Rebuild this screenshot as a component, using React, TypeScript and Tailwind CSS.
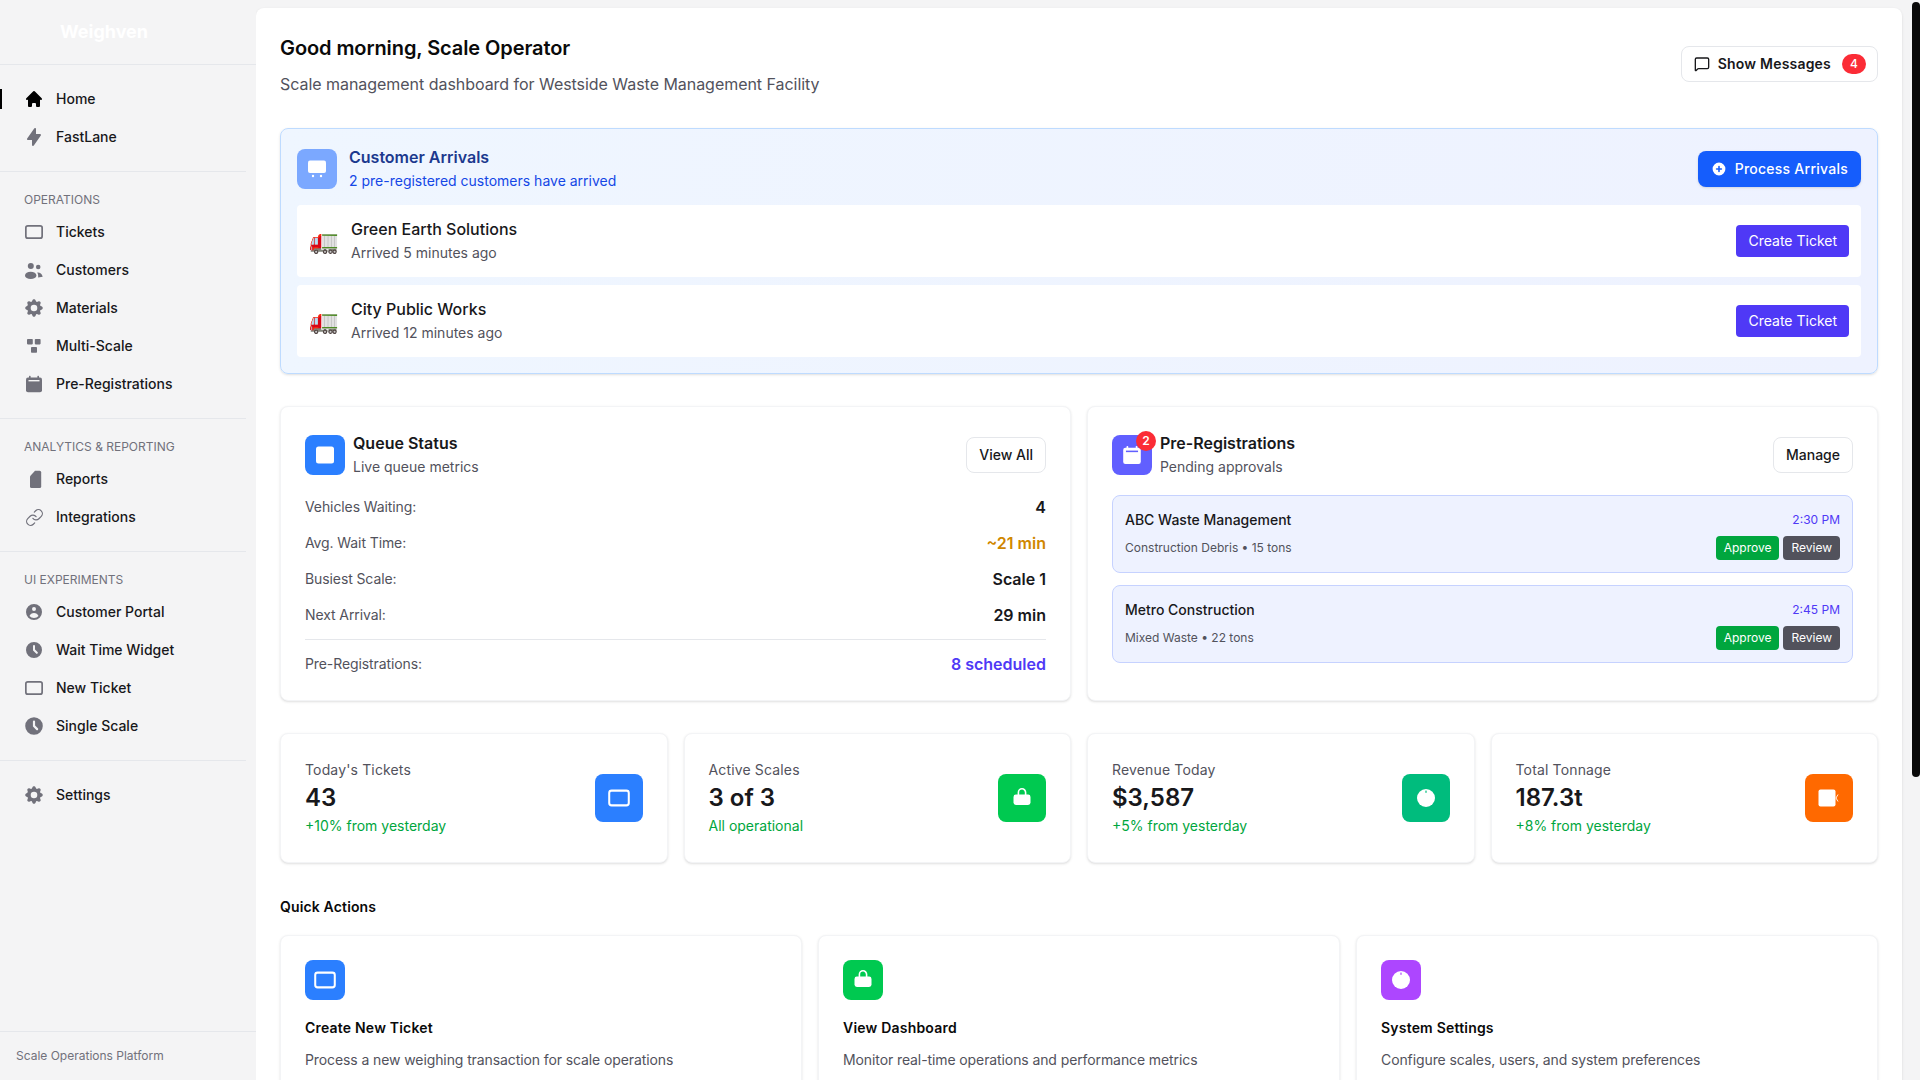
import type { ReactNode } from 'react'
import { Link as LinkIcon, MessageSquare } from 'lucide-react'
import { HiClock, HiCog, HiHome, HiLightningBolt, HiPlusCircle, HiUserCircle } from 'react-icons/hi'

function TicketOutline({ className = 'w-5 h-5' }: { className?: string }) {
  return (
    <svg viewBox="0 0 20 20" className={className} fill="none" stroke="currentColor" strokeWidth="1.7">
      <rect x="1.85" y="3.85" width="16.3" height="12.3" rx="2" />
    </svg>
  )
}

function TicketSolid({ className = 'w-5 h-5' }: { className?: string }) {
  return (
    <svg viewBox="0 0 20 20" className={className} fill="currentColor">
      <rect x="1" y="1.5" width="18" height="17" rx="2.5" />
    </svg>
  )
}

function UsersIcon() {
  return (
    <svg viewBox="0 0 20 20" className="w-5 h-5" fill="currentColor">
      <circle cx="6.8" cy="6" r="3" />
      <circle cx="14.2" cy="7" r="2.3" />
      <ellipse cx="6.7" cy="15.4" rx="5.7" ry="3.6" />
      <path d="M13.2 12.6c2.4-.4 4.6.9 5.5 4.2l-4.6.6c.3-1.9-.1-3.4-.9-4.8z" />
    </svg>
  )
}

function ScalesIcon() {
  return (
    <svg viewBox="0 0 20 20" className="w-5 h-5" fill="currentColor">
      <rect x="3" y="3" width="5.8" height="5.4" rx="0.8" />
      <rect x="10.8" y="3" width="5.8" height="5.4" rx="0.8" />
      <rect x="7" y="11" width="6" height="5.8" rx="0.8" />
    </svg>
  )
}

function CalendarIcon({ strip, className = 'w-5 h-5' }: { strip: string; className?: string }) {
  return (
    <svg viewBox="0 0 20 20" className={className} fill="currentColor">
      <rect x="5" y="1.8" width="1.6" height="3" rx="0.6" />
      <rect x="13.4" y="1.8" width="1.6" height="3" rx="0.6" />
      <rect x="2" y="3.4" width="16" height="14.8" rx="2" />
      <rect x="4.5" y="6" width="11" height="1.4" fill={strip} />
    </svg>
  )
}

function ReportIcon() {
  return (
    <svg viewBox="0 0 20 20" className="w-5 h-5" fill="currentColor">
      <path d="M11 1.8h4.6a1.6 1.6 0 0 1 1.6 1.6v14a1.6 1.6 0 0 1-1.6 1.6H7.6A1.6 1.6 0 0 1 6 17.4V7.2z" />
    </svg>
  )
}

function LockIcon({ className = 'w-5 h-5' }: { className?: string }) {
  return (
    <svg viewBox="0 0 20 20" className={className} fill="white">
      <path d="M6.4 8V4.4a3.6 3.6 0 0 1 7.2 0V8" fill="none" stroke="white" strokeWidth="1.6" />
      <rect x="1.5" y="6.5" width="17" height="10.5" rx="2.4" />
    </svg>
  )
}

function DialIcon({ tick, className = 'w-5 h-5' }: { tick: string; className?: string }) {
  return (
    <svg viewBox="0 0 20 20" className={className}>
      <circle cx="10" cy="10" r="9" fill="white" />
      <rect x="9.4" y="2.6" width="1.2" height="2.2" fill={tick} />
    </svg>
  )
}

function TonnageIcon() {
  return (
    <svg viewBox="0 0 24 24" className="w-6 h-6">
      <rect x="1.5" y="3.5" width="17" height="17" rx="2" fill="white" />
      <path d="M21 8.5 19 12l2 3.5" fill="none" stroke="white" strokeWidth="0.9" />
    </svg>
  )
}

function TruckIcon() {
  return <span className="w-[30px] shrink-0 text-2xl leading-none">🚛</span>
}

const navSections: { title?: string; items: { label: string; icon: ReactNode; active?: boolean }[] }[] = [
  {
    items: [
      { label: 'Home', icon: <HiHome className="w-5 h-5 text-black" />, active: true },
      { label: 'FastLane', icon: <HiLightningBolt className="w-5 h-5" /> },
    ],
  },
  {
    title: 'Operations',
    items: [
      { label: 'Tickets', icon: <TicketOutline /> },
      { label: 'Customers', icon: <UsersIcon /> },
      { label: 'Materials', icon: <HiCog className="w-[22px] h-[22px] shrink-0" /> },
      { label: 'Multi-Scale', icon: <ScalesIcon /> },
      { label: 'Pre-Registrations', icon: <CalendarIcon strip="#f4f4f5" /> },
    ],
  },
  {
    title: 'Analytics & Reporting',
    items: [
      { label: 'Reports', icon: <ReportIcon /> },
      { label: 'Integrations', icon: <LinkIcon className="w-[19px] h-[19px]" strokeWidth={1.5} /> },
    ],
  },
  {
    title: 'UI Experiments',
    items: [
      { label: 'Customer Portal', icon: <HiUserCircle className="w-5 h-5" /> },
      { label: 'Wait Time Widget', icon: <HiClock className="w-5 h-5" /> },
      { label: 'New Ticket', icon: <TicketOutline /> },
      { label: 'Single Scale', icon: <HiClock className="w-[22px] h-[22px] shrink-0" /> },
    ],
  },
  {
    items: [{ label: 'Settings', icon: <HiCog className="w-[22px] h-[22px] shrink-0" /> }],
  },
]

function Sidebar() {
  return (
    <aside className="flex h-screen w-64 shrink-0 flex-col bg-[#f4f4f5]">
      <div className="flex h-[65px] shrink-0 items-center border-b border-gray-200 pl-[60px] text-lg font-bold text-white">
        Weighven
      </div>
      {navSections.map((section, i) => (
        <nav
          key={section.title ?? i}
          className={`mr-[10px] pb-4 ${section.title ? 'pt-5' : 'pt-4'} ${i < navSections.length - 1 ? 'border-b border-gray-200' : ''}`}
        >
          {section.title && (
            <p className="mb-1.5 pl-6 text-xs uppercase text-[#71717b]">{section.title}</p>
          )}
          <ul className="flex flex-col gap-0.5">
            {section.items.map((item) => (
              <li key={item.label} className="relative flex h-9 items-center pl-6 text-sm font-medium text-[#18181b]">
                {item.active && <span className="absolute left-0 top-2 h-5 w-0.5 bg-black" />}
                <span className="mr-3 flex h-5 w-5 items-center justify-center text-[#71717b]">{item.icon}</span>
                {item.label}
              </li>
            ))}
          </ul>
        </nav>
      ))}
      <div className="mt-auto border-t border-gray-200 px-4 py-4 text-xs text-[#71717b]">
        Scale Operations Platform
      </div>
    </aside>
  )
}

const arrivals = [
  { name: 'Green Earth Solutions', time: 'Arrived 5 minutes ago' },
  { name: 'City Public Works', time: 'Arrived 12 minutes ago' },
]

function ArrivalsPanel() {
  return (
    <section className="mb-8 rounded-lg border border-[#bedbff] bg-gradient-to-r from-[#eff6ff] to-[#eef2ff] p-4 shadow-sm">
      <div className="mb-3 flex items-center justify-between">
        <div className="flex items-center gap-3">
          <div className="flex h-10 w-10 items-center justify-center rounded-lg bg-[#7ba8ff]">
            <svg viewBox="0 0 20 20" className="w-5 h-5" fill="white">
              <rect x="1" y="1.5" width="18" height="12.5" rx="2" />
              <circle cx="6" cy="17" r="1.2" />
              <circle cx="14" cy="17" r="1.2" />
            </svg>
          </div>
          <div>
            <h2 className="text-base font-semibold text-[#1c398e]">Customer Arrivals</h2>
            <p className="my-0.5 text-sm text-[#1447e6]">2 pre-registered customers have arrived</p>
          </div>
        </div>
        <button className="flex h-9 items-center gap-2 rounded-lg bg-[#155dfc] px-[13px] text-sm font-medium tracking-[0.25px] text-white shadow-sm">
          <HiPlusCircle className="w-4 h-4" />
          Process Arrivals
        </button>
      </div>
      <div className="flex flex-col gap-2">
        {arrivals.map((a) => (
          <div key={a.name} className="flex items-center justify-between rounded bg-white px-3 py-3">
            <div className="flex items-center gap-3">
              <TruckIcon />
              <div>
                <p className="text-base font-medium text-[#18181b]">{a.name}</p>
                <p className="my-0.5 text-sm text-[#52525c]">{a.time}</p>
              </div>
            </div>
            <button className="rounded bg-[#4f39f6] px-3 py-1.5 text-sm text-white">Create Ticket</button>
          </div>
        ))}
      </div>
    </section>
  )
}

const cardClass = 'rounded-lg border border-gray-100 bg-white p-6 shadow-sm'

function CardHeader(props: { icon: ReactNode; title: string; sub: string; action: string }) {
  return (
    <div className="mb-4 flex items-center justify-between">
      <div className="flex items-center gap-2">
        {props.icon}
        <div>
          <h3 className="text-base font-semibold text-[#18181b]">{props.title}</h3>
          <p className="my-0.5 text-sm text-[#52525c]">{props.sub}</p>
        </div>
      </div>
      <button className="h-9 rounded-lg border border-gray-200 bg-white px-3 text-sm font-medium text-[#18181b]">
        {props.action}
      </button>
    </div>
  )
}

const queueRows = [
  { label: 'Vehicles Waiting:', value: '4', color: 'text-[#18181b]' },
  { label: 'Avg. Wait Time:', value: '~21 min', color: 'text-[#d08700]' },
  { label: 'Busiest Scale:', value: 'Scale 1', color: 'text-[#18181b]' },
  { label: 'Next Arrival:', value: '29 min', color: 'text-[#18181b]' },
]

function QueueCard() {
  return (
    <div className={cardClass}>
      <CardHeader
        icon={
          <div className="flex h-10 w-10 items-center justify-center rounded-lg bg-[#2b7fff] text-white">
            <TicketSolid />
          </div>
        }
        title="Queue Status"
        sub="Live queue metrics"
        action="View All"
      />
      <div className="flex flex-col gap-3">
        {queueRows.map((r) => (
          <div key={r.label} className="flex items-center justify-between">
            <span className="text-sm tracking-[-0.1px] text-[#52525c]">{r.label}</span>
            <span className={`text-base font-semibold ${r.color}`}>{r.value}</span>
          </div>
        ))}
      </div>
      <div className="mt-3 flex items-center justify-between border-t border-gray-200 pt-3">
        <span className="text-sm tracking-[-0.1px] text-[#52525c]">Pre-Registrations:</span>
        <span className="text-base font-semibold text-[#4f39f6]">8 scheduled</span>
      </div>
    </div>
  )
}

const preRegs = [
  { name: 'ABC Waste Management', detail: 'Construction Debris • 15 tons', time: '2:30 PM' },
  { name: 'Metro Construction', detail: 'Mixed Waste • 22 tons', time: '2:45 PM' },
]

function PreRegCard() {
  return (
    <div className={cardClass}>
      <CardHeader
        icon={
          <div className="relative flex h-10 w-10 items-center justify-center rounded-lg bg-[#615fff] text-white">
            <CalendarIcon strip="#615fff" className="w-[22px] h-[22px]" />
            <span className="absolute -right-1 -top-1 flex h-5 w-5 items-center justify-center rounded-full bg-[#fb2c36] text-xs font-semibold">
              2
            </span>
          </div>
        }
        title="Pre-Registrations"
        sub="Pending approvals"
        action="Manage"
      />
      <div className="flex flex-col gap-3">
        {preRegs.map((p) => (
          <div key={p.name} className="rounded-lg border border-[#c6d2ff] bg-[#eef2ff] p-3">
            <div className="mb-1 flex h-6 items-center justify-between">
              <span className="text-sm font-medium text-[#18181b]">{p.name}</span>
              <span className="text-xs text-[#4f39f6]">{p.time}</span>
            </div>
            <div className="flex items-center justify-between">
              <span className="text-xs text-[#52525c]">{p.detail}</span>
              <div className="flex gap-1">
                <button className="rounded bg-[#00a63e] px-2 py-1 text-xs text-white">Approve</button>
                <button className="rounded bg-[#52525c] px-2 py-1 text-xs text-white">Review</button>
              </div>
            </div>
          </div>
        ))}
      </div>
    </div>
  )
}

const stats = [
  { label: "Today's Tickets", value: '43', note: '+10% from yesterday', bg: 'bg-[#2b7fff]', icon: <span className="text-white"><TicketOutline className="w-6 h-6" /></span> },
  { label: 'Active Scales', value: '3 of 3', note: 'All operational', bg: 'bg-[#00c950]', icon: <LockIcon /> },
  { label: 'Revenue Today', value: '$3,587', note: '+5% from yesterday', bg: 'bg-[#00bc7d]', icon: <DialIcon tick="#00bc7d" /> },
  { label: 'Total Tonnage', value: '187.3t', note: '+8% from yesterday', bg: 'bg-[#ff6900]', icon: <TonnageIcon /> },
]

const actions = [
  { title: 'Create New Ticket', desc: 'Process a new weighing transaction for scale operations', bg: 'bg-[#2b7fff]', icon: <span className="text-white"><TicketOutline className="w-6 h-6" /></span> },
  { title: 'View Dashboard', desc: 'Monitor real-time operations and performance metrics', bg: 'bg-[#00c950]', icon: <LockIcon /> },
  { title: 'System Settings', desc: 'Configure scales, users, and system preferences', bg: 'bg-[#ad46ff]', icon: <DialIcon tick="#ad46ff" /> },
]

export default function App() {
  return (
    <div className="relative flex h-screen overflow-hidden bg-[#f4f4f5] font-['Inter',sans-serif] [&_button]:whitespace-nowrap">
      <Sidebar />
      <div className="h-screen flex-1 overflow-hidden">
        <main className="mb-2 mr-[18px] mt-2 min-h-[1489px] rounded-lg bg-white p-6 shadow-sm">
          <header className="mb-8 flex items-center justify-between">
            <div>
              <h1 className="mt-0.5 text-xl font-semibold tracking-[-0.09px] text-[#0a0a0a]">Good morning, Scale Operator</h1>
              <p className="mt-2.5 text-base tracking-[-0.04px] text-[#52525c]">
                Scale management dashboard for Westside Waste Management Facility
              </p>
            </div>
            <button className="flex h-9 items-center gap-2 rounded-lg border border-gray-200 bg-white pl-3 pr-[11px] text-sm font-semibold tracking-[0.2px] text-[#18181b]">
              <MessageSquare className="w-4 h-4" strokeWidth={2} />
              Show Messages
              <span className="ml-[3px] flex h-5 w-6 items-center justify-center rounded-full bg-[#fb2c36] text-xs font-medium text-white">
                4
              </span>
            </button>
          </header>

          <ArrivalsPanel />

          <div className="mb-8 grid grid-cols-2 gap-4">
            <QueueCard />
            <PreRegCard />
          </div>

          <div className="mb-8 grid grid-cols-4 gap-4">
            {stats.map((s) => (
              <div key={s.label} className={`${cardClass} flex h-[130px] items-center justify-between`}>
                <div>
                  <p className="text-sm tracking-[0.15px] text-[#52525c]">{s.label}</p>
                  <p className="mt-0.5 text-2xl font-semibold text-[#18181b]">{s.value}</p>
                  <p className="mt-0.5 text-sm text-[#00a63e]">{s.note}</p>
                </div>
                <div className={`flex h-12 w-12 items-center justify-center rounded-lg ${s.bg}`}>{s.icon}</div>
              </div>
            ))}
          </div>

          <h3 className="mb-4 text-sm font-semibold leading-6 tracking-[0.15px] text-[#0a0a0a]">Quick Actions</h3>
          <div className="grid grid-cols-3 gap-4">
            {actions.map((a) => (
              <div key={a.title} className={cardClass}>
                <div className={`mb-4 flex h-10 w-10 items-center justify-center rounded-lg ${a.bg}`}>{a.icon}</div>
                <h4 className="text-sm font-semibold leading-6 tracking-[0.2px] text-[#0a0a0a]">{a.title}</h4>
                <p className="mt-2.5 text-sm tracking-[-0.1px] text-[#52525c]">{a.desc}</p>
              </div>
            ))}
          </div>
        </main>
      </div>
      <div className="absolute right-0 top-0.5 h-[775px] w-2 rounded-full bg-[#0a0a0a]" />
    </div>
  )
}
